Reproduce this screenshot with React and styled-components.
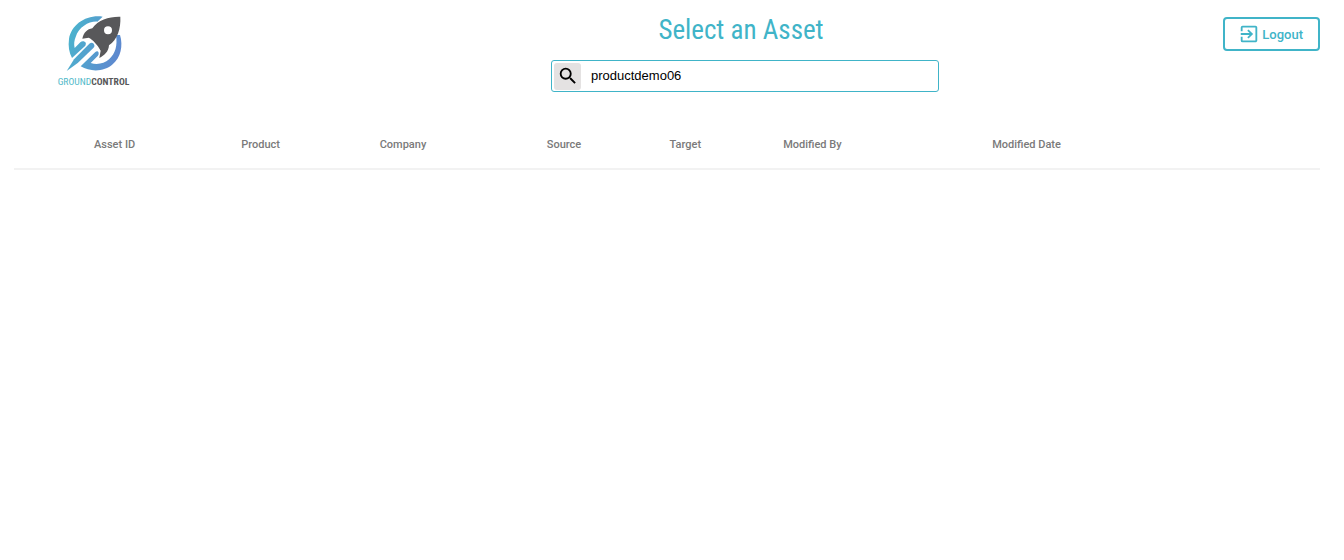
import { useState } from 'react';
import styled, { createGlobalStyle } from 'styled-components';

const columns = [
    { label: 'Asset ID', width: '17.4%' },
    { label: 'Product', width: '10.6%' },
    { label: 'Company', width: '12.8%' },
    { label: 'Source', width: '9.4%' },
    { label: 'Target', width: '8.7%' },
    { label: 'Modified By', width: '16%' },
    { label: 'Modified Date', width: '25.1%' },
];

const Logo = () => (
    <LogoImage viewBox='24 20 216 216' role='img' aria-label='Ground Control'>
        <defs>
            <linearGradient id='ring' gradientUnits='userSpaceOnUse' x1='60' y1='90' x2='215' y2='140'>
                <stop offset='0' stopColor='#4cb1cd' />
                <stop offset='1' stopColor='#5f86cf' />
            </linearGradient>
        </defs>
        <g fill='url(#ring)'>
            <path d='M158 25C110 18 64 48 57 92C54 114 57 132 66 149L106 112Q111 102 101 99Q95 98 91 102L74 119C71 107 73 96 77 86C86 56 118 38 142 40Z' />
            <path d='M50 188L72 153L118 106Q125 100 131 106Q136 113 130 119L84 163Z' />
            <path d='M198 80L210 80C220 112 212 148 188 168C164 190 122 192 92 174L136 131Q143 126 146 133Q147 139 143 143L122 164C142 170 162 166 178 152C196 136 203 112 198 80Z' />
        </g>
        <path
            fill='#58585a'
            fillRule='evenodd'
            d='M211 25C178 24 145 34 127 60C112 62 101 73 97 91L116 88C128 94 142 108 152 127L148 149C163 142 176 130 177 111C202 93 213 62 211 25ZM174 54A12 12 0 1 1 174 78A12 12 0 1 1 174 54Z'
        />
        <LogoText x='23' y='229'>GROUND<tspan>CONTROL</tspan></LogoText>
    </LogoImage>
);

const App = () => {
    const [search, setSearch] = useState('productdemo06');

    return (
        <>
            <GlobalStyle />
            <Page>
                <Header>
                    <Logo />
                    <SearchArea>
                        <Title>Select an Asset</Title>
                        <SearchBox onSubmit={e => e.preventDefault()}>
                            <SearchButton type='submit' aria-label='Search'>
                                <svg viewBox='0 0 24 24'>
                                    <path d='M15.5 14h-.79l-.28-.27A6.471 6.471 0 0 0 16 9.5 6.5 6.5 0 1 0 9.5 16c1.61 0 3.09-.59 4.23-1.57l.27.28v.79l5 4.99L20.49 19l-4.99-5zm-6 0C7.01 14 5 11.99 5 9.5S7.01 5 9.5 5 14 7.01 14 9.5 11.99 14 9.5 14z' />
                                </svg>
                            </SearchButton>
                            <SearchInput
                                type='text'
                                aria-label='Search assets'
                                value={search}
                                onChange={e => setSearch(e.target.value)}
                            />
                        </SearchBox>
                    </SearchArea>
                    <LogoutButton type='button'>
                        <svg viewBox='0 0 24 24'>
                            <path d='M10.09 15.59L11.5 17l5-5-5-5-1.41 1.41L12.67 11H3v2h9.67l-2.58 2.59zM19 3H5a2 2 0 0 0-2 2v4h2V5h14v14H5v-4H3v4a2 2 0 0 0 2 2h14c1.1 0 2-.9 2-2V5c0-1.1-.9-2-2-2z' />
                        </svg>
                        Logout
                    </LogoutButton>
                </Header>

                <AssetTable>
                    <thead>
                        <tr>
                            {columns.map(({ label, width }) => (
                                <HeadCell key={label} scope='col' $width={width}>{label}</HeadCell>
                            ))}
                        </tr>
                    </thead>
                    <tbody />
                </AssetTable>
            </Page>
        </>
    );
};

export default App;


const GlobalStyle = createGlobalStyle`
    :root {
        --color-primary: #40b4c8;
        --color-text-muted: #7a7a7a;
    }

    *, *::before, *::after {
        box-sizing: border-box;
    }

    body {
        margin: 0;
        background-color: white;
        font-family: Roboto, sans-serif;
    }
`

const Page = styled.main`
    padding: 12px 24px 0 14px;
`

const Header = styled.header`
    display: grid;
    grid-template-columns: 537fr 388fr 381fr;
    align-items: start;
`

const LogoImage = styled.svg`
    width: 72px;
    height: 72px;
    margin: 3px 0 0 44px;
    overflow: visible;
`

const LogoText = styled.text`
    font: 400 29px 'Roboto Condensed', sans-serif;
    fill: #4fb9c9;

    tspan {
        font-weight: 700;
        fill: #58585a;
    }
`

const SearchArea = styled.div`
    display: flex;
    flex-direction: column;
    gap: 12px;
`

const Title = styled.h1`
    margin: 0;
    padding-right: 8px;
    color: var(--color-primary);
    font: 400 27px/36px 'Roboto Condensed', sans-serif;
    text-align: center;
`

const SearchBox = styled.form`
    display: flex;
    align-items: center;
    height: 32px;
    padding: 2px;
    border: 1px solid var(--color-primary);
    border-radius: 3px;
`

const SearchButton = styled.button`
    display: flex;
    align-items: center;
    justify-content: center;
    flex: none;
    width: 27px;
    height: 27px;
    padding: 0;
    border: none;
    border-radius: 3px;
    background-color: #e4e2e2;
    cursor: pointer;

    svg {
        width: 22px;
        height: 22px;
    }
`

const SearchInput = styled.input`
    flex: 1;
    min-width: 0;
    height: 100%;
    padding: 0 10px 2px;
    border: none;
    outline: none;
    background: transparent;
    color: black;
    font: 400 13px 'Liberation Sans', Arial, sans-serif;
`

const LogoutButton = styled.button`
    display: flex;
    align-items: center;
    justify-content: center;
    justify-self: end;
    gap: 2px;
    height: 34px;
    margin-top: 5px;
    padding: 0 15px 0 13px;
    border: 2px solid var(--color-primary);
    border-radius: 4px;
    background-color: white;
    color: var(--color-primary);
    font: 500 13px Roboto, sans-serif;
    cursor: pointer;

    svg {
        width: 22px;
        height: 22px;
        fill: currentColor;
    }
`

const AssetTable = styled.table`
    width: 100%;
    margin-top: 27px;
    border-collapse: collapse;
    table-layout: fixed;
`

const HeadCell = styled.th`
    width: ${({ $width }) => $width};
    height: 50px;
    padding: 2px 0 0;
    border-bottom: 2px solid #f2f2f2;
    color: var(--color-text-muted);
    font: 500 11px Roboto, sans-serif;
    text-align: left;

    &:first-child {
        padding-left: 80px;
    }
`
